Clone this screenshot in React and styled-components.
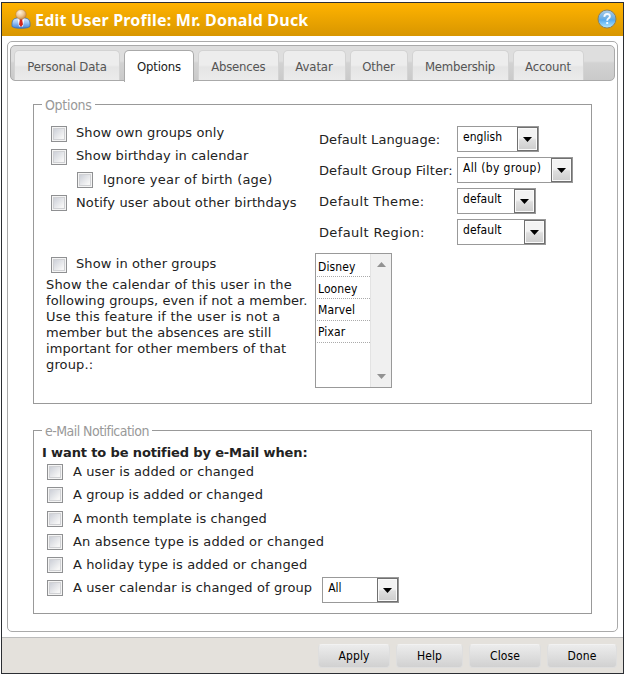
import React from "react";
import styled, { createGlobalStyle } from "styled-components";

const verdana = '"DejaVu Sans", Verdana, sans-serif';
const tahoma = '"DejaVu Sans Condensed", "DejaVu Sans", Tahoma, sans-serif';

const GlobalStyle = createGlobalStyle`
  * { box-sizing: border-box; }
  body { margin: 0; background: #fff; }
`;

const Dialog = styled.div`
  display: flex;
  flex-direction: column;
  width: 623px;
  height: 672px;
  margin: 2px 0 0 1px;
  border: 1px solid #2b2e33;
  background: #fff;
  font-family: ${verdana};
  font-size: 13px;
  color: #222;
`;

const TitleBar = styled.header`
  display: flex;
  align-items: center;
  height: 33px;
  padding: 0 6px 1px 9px;
  background: linear-gradient(#ffb300, #d89600);
`;

const Title = styled.h1`
  flex: 1;
  margin: 1px 0 0 4px;
  font: bold 16px/20px "Noto Sans", Tahoma, sans-serif;
  letter-spacing: 0.22px;
  white-space: nowrap;
  color: #fff;
`;

const Panel = styled.main`
  flex: 1;
  margin: 5px;
  padding: 3px 2px 0;
  border: 1px solid #aaa;
  border-radius: 5px;
`;

const TabBar = styled.nav`
  display: flex;
  height: 36px;
  padding: 4px 0 0 3px;
  border: 1px solid #aaa;
  border-radius: 5px;
  background: linear-gradient(#dedede 0 15px, #d2d2d2 17px, #cacaca);
`;

const Tab = styled.button`
  flex: none;
  width: ${(p) => p.$width}px;
  height: ${(p) => (p.$active ? 32 : 30)}px;
  margin: 0 4px 0 0;
  padding: ${(p) => (p.$active ? "1px 0 0" : "2px 0 0")};
  border: 1px solid ${(p) => (p.$active ? "#aaa" : "#d3d3d3")};
  border-bottom: 0;
  border-radius: 5px 5px 0 0;
  background: ${(p) => (p.$active ? "#fff" : "linear-gradient(#ededed 0 14px, #e5e5e5 16px, #ebebeb)")};
  font: 13px/16px ${tahoma};
  letter-spacing: ${(p) => p.$spacing || 0}px;
  white-space: nowrap;
  color: ${(p) => (p.$active ? "#212121" : "#555")};
`;

const Group = styled.fieldset`
  height: ${(p) => p.$height}px;
  margin: ${(p) => p.$top}px 0 0 23px;
  padding: 0 8px 0 ${(p) => p.$left}px;
  width: 559px;
  min-width: 0;
  border: 1px solid #999;
`;

const Legend = styled.legend`
  height: 19px;
  margin-left: ${(p) => p.$shift}px;
  padding: 0 3px;
  font: 14px/20px ${tahoma};
  letter-spacing: ${(p) => p.$spacing}px;
  color: #999;
  white-space: nowrap;
`;

const Columns = styled.div`
  display: flex;
`;

const LeftColumn = styled.div`
  width: 273px;
  padding-top: 12px;
`;

const RightColumn = styled.div`
  padding-top: 12px;
`;

const CheckRow = styled.label`
  display: flex;
  align-items: flex-start;
  height: ${(p) => p.$height || 23}px;
  padding-left: ${(p) => p.$indent}px;
  margin-top: ${(p) => p.$gap || 0}px;
`;

const CheckBox = styled.span`
  flex: none;
  width: 16px;
  height: 16px;
  margin-right: ${(p) => p.$gap || 9}px;
  border: 1px solid #8f9092;
  background: linear-gradient(135deg, #c3c7d1, #f6f6f6 75%);
  box-shadow: inset 0 0 0 1px #f4f4f4, inset 0 0 0 2px #d0d1d4;
`;

const Text = styled.span`
  margin-top: ${(p) => p.$drop || 0}px;
  line-height: 16px;
  white-space: nowrap;
  letter-spacing: ${(p) => p.$spacing || 0}px;
`;

const Note = styled.p`
  margin: -3px 0 0;
  line-height: 16px;
  white-space: nowrap;
`;

const NoteLine = styled.span`
  display: block;
  letter-spacing: ${(p) => p.$spacing || 0}px;
`;

const SettingRow = styled.div`
  display: flex;
  align-items: flex-start;
  height: 31px;
`;

const SettingName = styled.span`
  width: 138px;
  padding-top: 6px;
  line-height: 16px;
  white-space: nowrap;
  letter-spacing: ${(p) => p.$spacing || 0}px;
`;

const SelectBox = styled.div`
  display: flex;
  flex: none;
  justify-content: space-between;
  width: ${(p) => p.$width}px;
  height: 26px;
  margin: ${(p) => p.$drop || 0}px 0 0 ${(p) => p.$shift || 0}px;
  padding-left: 5px;
  border: 1px solid #999;
  background: #fff;
  font: 12px/21px ${tahoma};
  letter-spacing: ${(p) => p.$spacing || 0}px;
  white-space: nowrap;
  color: #000;
`;

const Arrow = styled.span`
  display: flex;
  align-items: center;
  justify-content: center;
  width: 21px;
  height: 24px;
  border: 1px solid #707070;
  background: linear-gradient(#f3f3f3 0 10px, #dedede 12px, #cdcdcd);
  box-shadow: inset 0 0 0 1px #fafafa;
`;

const ListBox = styled.div`
  display: flex;
  width: 77px;
  height: 135px;
  margin: 3px 0 0 -4px;
  border: 1px solid #999;
`;

const ListItems = styled.div`
  flex: 1;
  padding: 1px 0 0 1px;
`;

const ListItem = styled.div`
  height: 22px;
  padding: ${(p) => p.$top}px 0 0 1px;
  border-bottom: 1px dotted #aaa;
  font: 12px/16px ${tahoma};
  letter-spacing: 0.1px;
  color: #000;
`;

const ScrollBar = styled.div`
  display: flex;
  flex-direction: column;
  align-items: center;
  justify-content: space-between;
  width: 21px;
  padding: 8px 0;
  border-left: 1px solid #e3e3e3;
  background: #f0f0f0;
`;

const Heading = styled.h2`
  height: 19px;
  margin: 5px 0 0;
  font: bold 13px/16px ${verdana};
  letter-spacing: -0.13px;
  white-space: nowrap;
`;

const Footer = styled.footer`
  display: flex;
  height: 36px;
  justify-content: flex-end;
  padding: 6px 6px 0;
  gap: 6px;
  border-top: 1px solid #bbb;
  background: #e4e1dc;
`;

const ActionButton = styled.button`
  width: ${(p) => p.$width}px;
  height: 24px;
  padding: 0;
  border: 1px solid #dedede;
  border-top-color: #f2f2f2;
  border-radius: 4px;
  background: linear-gradient(#ececec, #d1d1d1);
  font: 12px/16px ${tahoma};
  letter-spacing: 0.1px;
  color: #000;
`;

const DownArrow = () => (
  <svg width="9" height="5" viewBox="0 0 9 5">
    <path d="M0 0h9L4.500 5z" fill="#000" />
  </svg>
);

const ScrollArrow = ({ up }) => (
  <svg width="9" height="5" viewBox="0 0 9 5">
    <path d={up ? "M0 5h9L4.500 0z" : "M0 0h9L4.500 5z"} fill="#929292" />
  </svg>
);

const UserIcon = () => (
  <svg width="20" height="20" viewBox="0 0 20 20">
    <defs>
      <linearGradient id="coat" x2="0" y2="1">
        <stop stopColor="#dcebfc" />
        <stop offset=".45" stopColor="#9cc5f5" />
        <stop offset="1" stopColor="#3f82d8" />
      </linearGradient>
      <radialGradient id="face" cx=".4" cy=".3" r=".7">
        <stop stopColor="#fff4dd" />
        <stop offset=".55" stopColor="#edc794" />
        <stop offset="1" stopColor="#c98a45" />
      </radialGradient>
    </defs>
    <path d="M1 17.500V14q.3-4.500 5-5h8q4.700.5 5 5v3.500q-1.500 1.800-9 1.800t-9-1.800z" fill="url(#coat)" stroke="#3c6faf" strokeWidth=".8" />
    <path d="M6.500 9h7L12 17.500H8z" fill="#f8fafe" />
    <path d="M8.500 9.500h3l-.3 1.500.8 4.500-2 2.500-2-2.500.8-4.500z" fill="#d1261d" />
    <ellipse cx="10" cy="5.500" rx="5.200" ry="5" fill="url(#face)" stroke="#a8703a" strokeWidth=".4" />
  </svg>
);

const HelpIcon = () => (
  <svg width="20" height="20" viewBox="0 0 20 20">
    <defs>
      <linearGradient id="orb" x2="0" y2="1">
        <stop stopColor="#a9cbe8" />
        <stop offset=".45" stopColor="#6fb0e4" />
        <stop offset=".55" stopColor="#55aaee" />
        <stop offset="1" stopColor="#b5eaff" />
      </linearGradient>
    </defs>
    <circle cx="10" cy="10" r="9" fill="url(#orb)" stroke="#8a8260" />
    <path d="M7.300 7.800q.3-2.800 2.900-2.800t2.700 2.300q0 1.300-1.500 2.200-1.200.7-1.200 2.200M10.200 13v2" fill="none" stroke="#f4faff" strokeWidth="1.900" />
  </svg>
);

const tabs = [
  ["Personal Data", 106, -0.15], ["Options", 70, -0.15], ["Absences", 80.5, -0.22], ["Avatar", 63, -0.1],
  ["Other", 58, -0.15], ["Membership", 97, -0.23], ["Account", 71, -0.2],
];

const options = [
  { text: "Show own groups only", indent: 5, spacing: 0.1, drop: -1 },
  { text: "Show birthday in calendar", indent: 5, spacing: 0.08, drop: -1 },
  { text: "Ignore year of birth (age)", indent: 31, spacing: 0.2, boxGap: 10 },
  { text: "Notify user about other birthdays", indent: 5, spacing: 0.12 },
  { text: "Show in other groups", indent: 5, spacing: 0.1, drop: -1, gap: 39 },
];

const settings = [
  ["Default Language:", 0.06, "english", 82, 0.05], ["Default Group Filter:", 0.1, "All (by group)", 116, 0.36],
  ["Default Theme:", 0.33, "default", 79, 0.1], ["Default Region:", 0.35, "default", 89, 0.1],
];

const groups = [["Disney", 4], ["Looney", 4], ["Marvel", 3], ["Pixar", 3]];

const notices = [
  ["A user is added or changed", 0.1, 23], ["A group is added or changed", 0.08, 24],
  ["A month template is changed", 0.04, 23], ["An absence type is added or changed", 0.15, 23],
  ["A holiday type is added or changed", 0.11, 23],
];

const noteLines = [
  ["Show the calendar of this user in the", 0.17], ["following groups, even if not a member.", 0.06],
  ["Use this feature if the user is not a", 0.24], ["member but the absences are still", 0.06],
  ["important for other members of that", 0.06], ["group.:", 0.15],
];

const Select = ({ value, ...rest }) => (
  <SelectBox {...rest}>
    {value}
    <Arrow><DownArrow /></Arrow>
  </SelectBox>
);

export default function App() {
  return (
    <>
      <GlobalStyle />
      <Dialog>
        <TitleBar>
          <UserIcon />
          <Title>Edit User Profile: Mr. Donald Duck</Title>
          <HelpIcon />
        </TitleBar>
        <Panel>
          <TabBar>
            {tabs.map(([name, width, spacing]) => (
              <Tab key={name} $width={width} $spacing={spacing} $active={name === "Options"}>{name}</Tab>
            ))}
          </TabBar>
          <Group $height={309} $top={14} $left={12}>
            <Legend $shift={-4} $spacing={-0.3}>Options</Legend>
            <Columns>
              <LeftColumn>
                {options.map((o) => (
                  <CheckRow key={o.text} $indent={o.indent} $gap={o.gap}>
                    <CheckBox $gap={o.boxGap} />
                    <Text $spacing={o.spacing} $drop={o.drop}>{o.text}</Text>
                  </CheckRow>
                ))}
                <Note>
                  {noteLines.map(([line, spacing]) => <NoteLine key={line} $spacing={spacing}>{line}</NoteLine>)}
                </Note>
              </LeftColumn>
              <RightColumn>
                {settings.map(([name, nameSpacing, value, width, spacing]) => (
                  <SettingRow key={name}>
                    <SettingName $spacing={nameSpacing}>{name}</SettingName>
                    <Select value={value} $width={width} $spacing={spacing} />
                  </SettingRow>
                ))}
                <ListBox>
                  <ListItems>
                    {groups.map(([item, top]) => <ListItem key={item} $top={top}>{item}</ListItem>)}
                  </ListItems>
                  <ScrollBar><ScrollArrow up /><ScrollArrow /></ScrollBar>
                </ListBox>
              </RightColumn>
            </Columns>
          </Group>
          <Group $height={193} $top={17} $left={8}>
            <Legend $shift={0} $spacing={-0.54}>e-Mail Notification</Legend>
            <Heading>I want to be notified by e-Mail when:</Heading>
            {notices.map(([line, spacing, height]) => (
              <CheckRow key={line} $indent={5} $height={height}>
                <CheckBox $gap={10} />
                <Text $spacing={spacing}>{line}</Text>
              </CheckRow>
            ))}
            <CheckRow as="div" $indent={5}>
              <CheckBox $gap={10} />
              <Text $spacing={0.11}>A user calendar is changed of group</Text>
              <Select value="All" $width={77} $shift={10} $drop={-3} />
            </CheckRow>
          </Group>
        </Panel>
        <Footer>
          <ActionButton $width={72}>Apply</ActionButton>
          <ActionButton $width={67}>Help</ActionButton>
          <ActionButton $width={72}>Close</ActionButton>
          <ActionButton $width={70}>Done</ActionButton>
        </Footer>
      </Dialog>
    </>
  );
}
